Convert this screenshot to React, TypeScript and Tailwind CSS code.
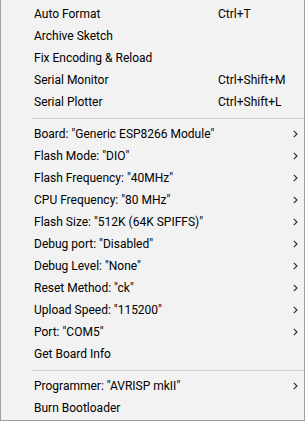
import React from "react";

type Item = { label: string; shortcut?: string; sub?: boolean } | "sep";

const items: Item[] = [
  { label: "Auto Format", shortcut: "Ctrl+T" },
  { label: "Archive Sketch" },
  { label: "Fix Encoding & Reload" },
  { label: "Serial Monitor", shortcut: "Ctrl+Shift+M" },
  { label: "Serial Plotter", shortcut: "Ctrl+Shift+L" },
  "sep",
  { label: 'Board: "Generic ESP8266 Module"', sub: true },
  { label: 'Flash Mode: "DIO"', sub: true },
  { label: 'Flash Frequency: "40MHz"', sub: true },
  { label: 'CPU Frequency: "80 MHz"', sub: true },
  { label: 'Flash Size: "512K (64K SPIFFS)"', sub: true },
  { label: 'Debug port: "Disabled"', sub: true },
  { label: 'Debug Level: "None"', sub: true },
  { label: 'Reset Method: "ck"', sub: true },
  { label: 'Upload Speed: "115200"', sub: true },
  { label: 'Port: "COM5"', sub: true },
  { label: "Get Board Info" },
  "sep",
  { label: 'Programmer: "AVRISP mkII"', sub: true },
  { label: "Burn Bootloader" },
];

function Chevron() {
  return (
    <svg width="5" height="8" viewBox="0 0 5 8" className="block">
      <path d="M0.8 0.8 L4 4 L0.8 7.2" fill="none" stroke="#333" strokeWidth="1.2" />
    </svg>
  );
}

export default function App() {
  return (
    <div
      className="w-[305px] h-[421px] bg-[#f2f2f2] border-l border-r border-b border-[#a0a0a0] pt-[3px] text-[12px] text-black overflow-hidden"
      style={{ fontFamily: 'Roboto, "Liberation Sans", Arial, sans-serif' }}
    >
      {items.map((it, i) =>
        it === "sep" ? (
          <div key={i} className="h-[10px] flex items-center pl-[30px]">
            <div className="h-px w-full bg-[#d4d4d4]" />
          </div>
        ) : (
          <div key={i} className="h-[22px] flex items-center pl-[33px] pr-[6px]">
            <span className="flex-1 whitespace-nowrap">{it.label}</span>
            {it.shortcut && <span className="w-[80px] whitespace-nowrap">{it.shortcut}</span>}
            {it.sub && <Chevron />}
          </div>
        )
      )}
    </div>
  );
}
